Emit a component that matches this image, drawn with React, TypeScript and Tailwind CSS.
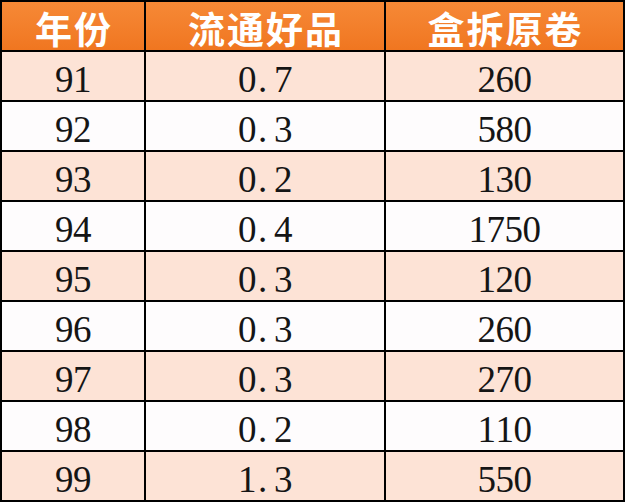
import React from 'react';

const rows = [
  ['91', '0.7', '260'],
  ['92', '0.3', '580'],
  ['93', '0.2', '130'],
  ['94', '0.4', '1750'],
  ['95', '0.3', '120'],
  ['96', '0.3', '260'],
  ['97', '0.3', '270'],
  ['98', '0.2', '110'],
  ['99', '1.3', '550'],
];

const headers = ['年份', '流通好品', '盒拆原卷'];

// half-width "SimSun-like" numbers: every glyph, the dot too, takes the same advance
const Num = ({ value }: { value: string }) => (
  <span className="inline-flex">
    {value.split('').map((ch, i) =>
      ch === '.' ? (
        <span key={i} className="inline-block w-[18px] text-left pl-[2px]">.</span>
      ) : (
        <span key={i} className="inline-block w-[18px] text-center">{ch}</span>
      )
    )}
  </span>
);

const App = () => {
  return (
    <div className="w-[626px] h-[502px] bg-white">
      <div className="w-[625px] bg-black p-[2px] grid grid-cols-[142px_238px_1fr] gap-[2px]">
        {headers.map((h) => (
          <div
            key={h}
            className="h-[48px] flex items-center justify-center pt-[4px] pl-[2px] bg-gradient-to-b from-[#f68936] to-[#f07620] text-white font-bold text-[37px] tracking-[2px] font-['Noto_Sans_CJK_SC',sans-serif] leading-none"
          >
            {h}
          </div>
        ))}
        {rows.map((r, i) => (
          <React.Fragment key={i}>
            {r.map((cell, j) => (
              <div
                key={j}
                className={
                  i % 2 === 0
                    ? "h-[48px] flex items-center justify-center pt-[6px] text-[37px] leading-none text-[#151515] font-['Liberation_Serif',serif] bg-[#fde3d6]"
                    : "h-[48px] flex items-center justify-center pt-[6px] text-[37px] leading-none text-[#151515] font-['Liberation_Serif',serif] bg-[#fefcfd]"
                }
              >
                <Num value={cell} />
              </div>
            ))}
          </React.Fragment>
        ))}
      </div>
    </div>
  );
};

export default App;
